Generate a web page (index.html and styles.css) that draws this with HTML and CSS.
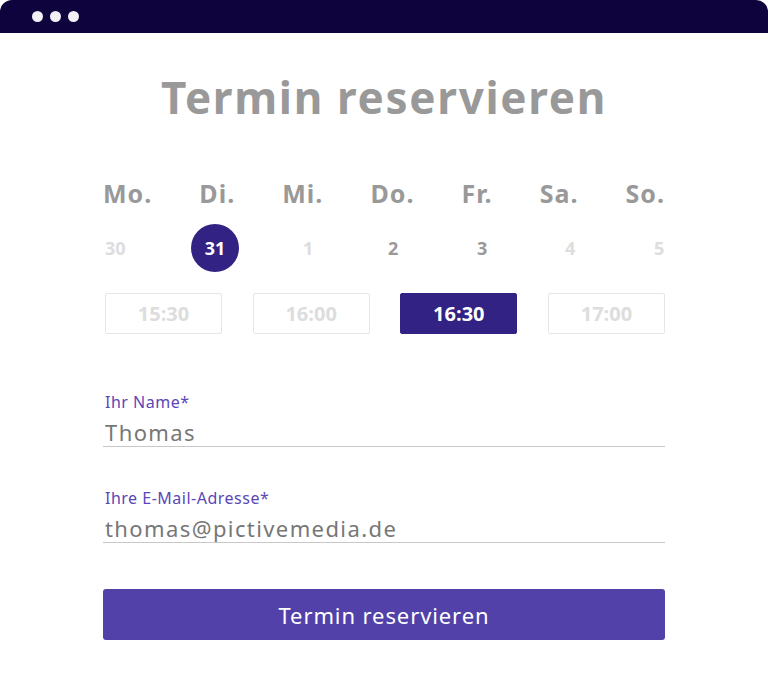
FILE: index.html
```html
<!DOCTYPE html>
<html lang="de">
<head>
  <meta charset="UTF-8" />
  <meta name="viewport" content="width=device-width, initial-scale=1.0"/>
  <title>Termin reservieren</title>
  <link rel="stylesheet" href="styles.css">
</head>
<body>
  <div class="window">
    <div class="titlebar">
      <span class="dot"></span>
      <span class="dot"></span>
      <span class="dot"></span>
    </div>

    <div class="content">
      <h1>Termin reservieren</h1>

      <div class="days">
        <span>Mo.</span>
        <span>Di.</span>
        <span>Mi.</span>
        <span>Do.</span>
        <span>Fr.</span>
        <span>Sa.</span>
        <span>So.</span>
      </div>

      <div class="dates">
        <span class="off">30</span>
        <span class="selected">31</span>
        <span class="off">1</span>
        <span>2</span>
        <span>3</span>
        <span class="off">4</span>
        <span class="off">5</span>
      </div>

      <div class="slots">
        <button class="slot">15:30</button>
        <button class="slot">16:00</button>
        <button class="slot active">16:30</button>
        <button class="slot">17:00</button>
      </div>

      <div class="field">
        <label>Ihr Name*</label>
        <div class="value">Thomas</div>
      </div>

      <div class="field">
        <label>Ihre E-Mail-Adresse*</label>
        <div class="value">thomas@pictivemedia.de</div>
      </div>

      <button class="submit">Termin reservieren</button>
    </div>
  </div>
</body>
</html>
```

FILE: styles.css
```css
* {
  box-sizing: border-box;
}

body {
  margin: 0;
  background: #fff;
  font-family: 'Noto Sans', sans-serif;
}

.window {
  width: 768px;
  height: 690px;
}

.titlebar {
  height: 33px;
  background: #0e033c;
  border-radius: 12px 12px 0 0;
  display: flex;
  align-items: center;
  gap: 7px;
  padding-left: 32px;
}

.dot {
  width: 11px;
  height: 11px;
  border-radius: 50%;
  background: #f1f0f4;
}

.content {
  width: 562px;
  margin: 0 auto;
  padding-top: 38px;
}

h1 {
  margin: 0;
  text-align: center;
  font-size: 44px;
  line-height: 52px;
  font-weight: 700;
  letter-spacing: 1.7px;
  color: #999;
}

.days {
  display: flex;
  justify-content: space-between;
  margin-top: 55px;
  font-size: 25px;
  font-weight: 700;
  letter-spacing: 1px;
  color: #999;
  line-height: 30px;
}

/* columns follow the uneven spacing of the date row */
.dates {
  display: grid;
  grid-template-columns: 86px 112px 85px 89px 88px 89px auto;
  align-items: center;
  margin-top: 16px;
  padding-left: 2px;
  font-family: 'Open Sans', sans-serif;
  font-size: 18px;
  font-weight: 700;
  color: #999;
  height: 48px;
}

.dates .off {
  color: #ddd;
}

.dates .selected {
  width: 48px;
  height: 48px;
  border-radius: 50%;
  background: #322283;
  color: #fff;
  display: flex;
  align-items: center;
  justify-content: center;
}

.slots {
  display: flex;
  justify-content: space-between;
  margin-top: 21px;
  padding-left: 2px;
}

.slot {
  width: 117px;
  height: 41px;
  border: 1px solid #e6e6e6;
  border-radius: 2px;
  background: #fff;
  font-family: 'Open Sans', sans-serif;
  font-size: 20px;
  font-weight: 700;
  color: #ddd;
}

.slot.active {
  background: #322283;
  border-color: #322283;
  color: #fff;
}

.field {
  margin-top: 59px;
  border-bottom: 1px solid #c8c8c8;
  padding-left: 2px;
}

.field + .field {
  margin-top: 42px;
}

.field label {
  display: block;
  font-size: 16px;
  line-height: 18px;
  letter-spacing: 0.5px;
  color: #5b46b8;
}

.field .value {
  font-size: 22px;
  line-height: 28px;
  letter-spacing: 1.4px;
  color: #777;
  padding-top: 7px;
}

.submit {
  display: block;
  width: 100%;
  height: 51px;
  margin-top: 46px;
  border: none;
  border-radius: 3px;
  background: #5341aa;
  color: #fff;
  font-family: 'Noto Sans', sans-serif;
  font-size: 22px;
  letter-spacing: 0.9px;
  cursor: pointer;
}
```
